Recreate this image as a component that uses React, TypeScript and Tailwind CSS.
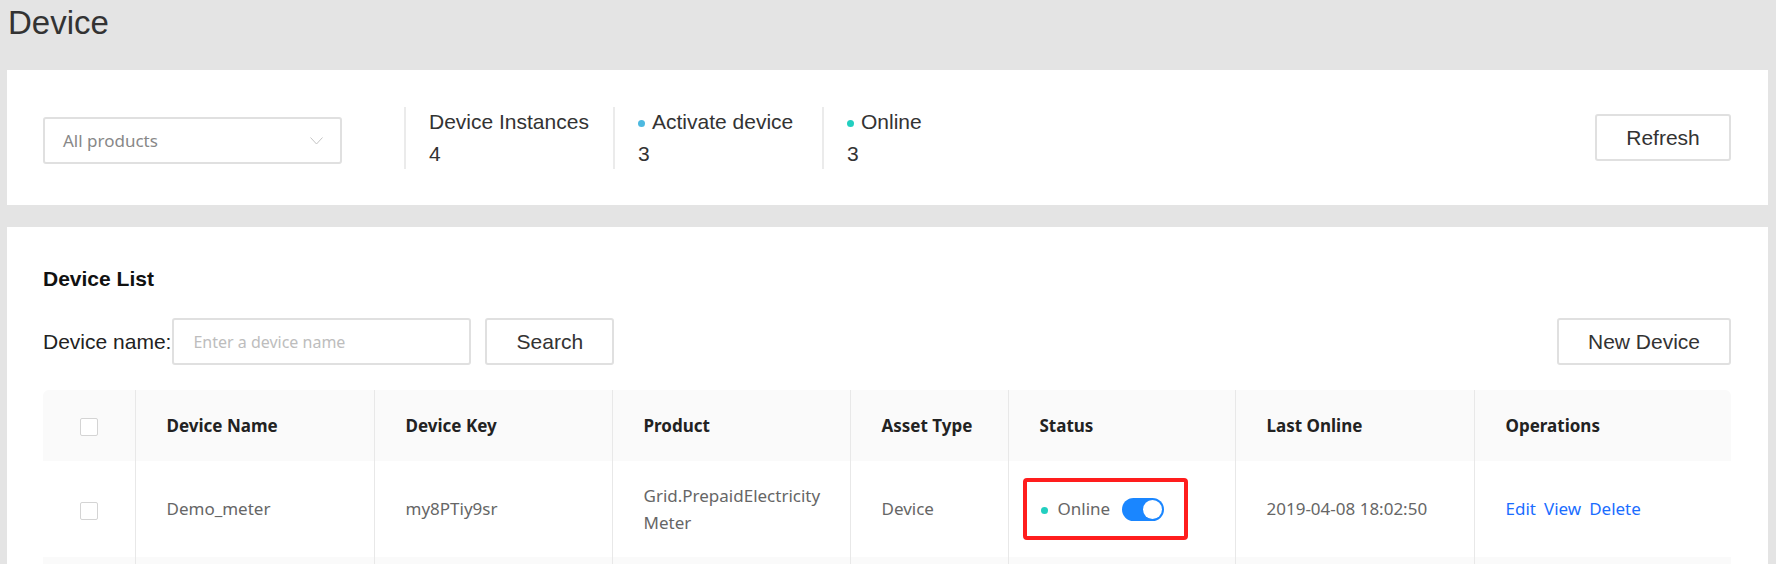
import React from "react";

const COLS = [92, 239, 238, 238, 158, 227, 239, 257];
const HEADERS = ["", "Device Name", "Device Key", "Product", "Asset Type", "Status", "Last Online", "Operations"];

function Checkbox() {
  return <span className="inline-block w-[18px] h-[18px] border border-[#d4d4d4] rounded-[2px] bg-white align-middle" />;
}

function Stat({ label, value, dot }: { label: string; value: number; dot?: string }) {
  return (
    <div className="h-[62px] w-[209px] border-l-2 border-[#ebebeb] pl-[23px] flex flex-col justify-center leading-[32px] text-[21px] text-[#333]">
      <div className="flex items-center">
        {dot && <span className={`w-[7px] h-[7px] rounded-full mr-[7px] translate-y-[2px] ${dot}`} />}
        <span>{label}</span>
      </div>
      <div>{value}</div>
    </div>
  );
}

export default function App() {
  return (
    <div className="min-h-[564px] bg-[#e4e4e4] font-['Liberation_Sans',Arial,sans-serif] text-[#333] overflow-hidden">
      <div className="h-[70px] pl-[8px] pt-[5px]">
        <h1 className="text-[33px] leading-[36px] text-[#333]">Device</h1>
      </div>

      {/* summary */}
      <div className="ml-[7px] mr-[8px] h-[135px] bg-white flex items-center pl-[36px] pr-[37px]">
        <div className="mt-[6px] w-[299px] h-[47px] border-2 border-[#e0e0e0] rounded-[3px] flex items-center justify-between pl-[18px] pr-[17px] font-['Noto_Sans',sans-serif]">
          <span className="text-[17px] text-[#888]">All products</span>
          <svg width="13" height="8" viewBox="0 0 13 8">
            <polyline points="0.5,0.5 6.5,7 12.5,0.5" fill="none" stroke="#c4c4c4" strokeWidth="1" />
          </svg>
        </div>
        <div className="ml-[62px] flex">
          <Stat label="Device Instances" value={4} />
          <Stat label="Activate device" value={3} dot="bg-[#4db9e0]" />
          <Stat label="Online" value={3} dot="bg-[#22cfc0]" />
        </div>
        <button className="ml-auto w-[136px] h-[47px] border-2 border-[#e0e0e0] rounded-[3px] text-[21px] text-[#333] bg-white">
          Refresh
        </button>
      </div>

      {/* device list */}
      <div className="mt-[22px] ml-[7px] mr-[8px] bg-white pt-[38px] pl-[36px] pr-[37px] pb-[20px]">
        <h2 className="text-[21px] leading-[28px] font-bold text-[#111]">Device List</h2>
        <div className="mt-[25px] flex items-center h-[47px]">
          <span className="text-[21px] text-[#222]">Device name:</span>
          <div className="ml-[1px] w-[299px] h-[47px] border-2 border-[#e0e0e0] rounded-[3px] flex items-center pl-[19px] font-['Noto_Sans',sans-serif]">
            <span className="text-[16px] text-[#bdbdbd]">Enter a device name</span>
          </div>
          <button className="ml-[14px] w-[129px] h-[47px] border-2 border-[#e0e0e0] rounded-[3px] text-[21px] text-[#333] bg-white">
            Search
          </button>
          <button className="ml-auto w-[174px] h-[47px] border-2 border-[#e0e0e0] rounded-[3px] text-[21px] text-[#333] bg-white">
            New Device
          </button>
        </div>

        <table className="mt-[25px] w-[1688px] table-fixed border-collapse font-['Noto_Sans',sans-serif] text-[17px]">
          <colgroup>
            {COLS.map((w, i) => (
              <col key={i} style={{ width: w }} />
            ))}
          </colgroup>
          <thead>
            <tr className="h-[71px] bg-[#fafafa]">
              {HEADERS.map((h, i) => (
                <th
                  key={i}
                  className={`font-bold text-[#222] ${i === 0 ? "text-center rounded-tl-[6px]" : "text-left pl-[31px] border-l border-[#e8e8e8]"} ${i === 7 ? "rounded-tr-[6px]" : ""}`}
                >
                  {i === 0 ? <Checkbox /> : h}
                </th>
              ))}
            </tr>
          </thead>
          <tbody className="text-[#666]">
            <tr className="h-[96px]">
              <td className="text-center"><Checkbox /></td>
              <td className="pl-[31px] border-l border-[#e8e8e8]">Demo_meter</td>
              <td className="pl-[31px] border-l border-[#e8e8e8]">my8PTiy9sr</td>
              <td className="pl-[31px] border-l border-[#e8e8e8] leading-[27px]">
                Grid.PrepaidElectricity
                <br />
                Meter
              </td>
              <td className="pl-[31px] border-l border-[#e8e8e8]">Device</td>
              <td className="pl-[32px] border-l border-[#e8e8e8]">
                <div className="-ml-[18px] inline-flex items-center h-[62px] w-[165px] border-[4px] border-[#ff1d1d] rounded-[4px] pl-[14px]">
                  <span className="w-[7px] h-[7px] rounded-full bg-[#22cfc0] translate-y-[1px]" />
                  <span className="ml-[10px]">Online</span>
                  <span className="ml-[12px] w-[42px] h-[23px] rounded-full bg-[#1a86ff] flex items-center justify-end pr-[2px]">
                    <span className="w-[19px] h-[19px] rounded-full bg-white" />
                  </span>
                </div>
              </td>
              <td className="pl-[31px] border-l border-[#e8e8e8]">2019-04-08 18:02:50</td>
              <td className="pl-[31px] border-l border-[#e8e8e8] text-[#1a6dff]">
                <span className="flex gap-[8px]">
                  <a>Edit</a>
                  <a>View</a>
                  <a>Delete</a>
                </span>
              </td>
            </tr>
            <tr className="h-[96px] bg-[#fafafa]">
              <td className="text-center"><Checkbox /></td>
              {COLS.slice(1).map((_, i) => (
                <td key={i} className="border-l border-[#e8e8e8]" />
              ))}
            </tr>
          </tbody>
        </table>
      </div>
    </div>
  );
}
